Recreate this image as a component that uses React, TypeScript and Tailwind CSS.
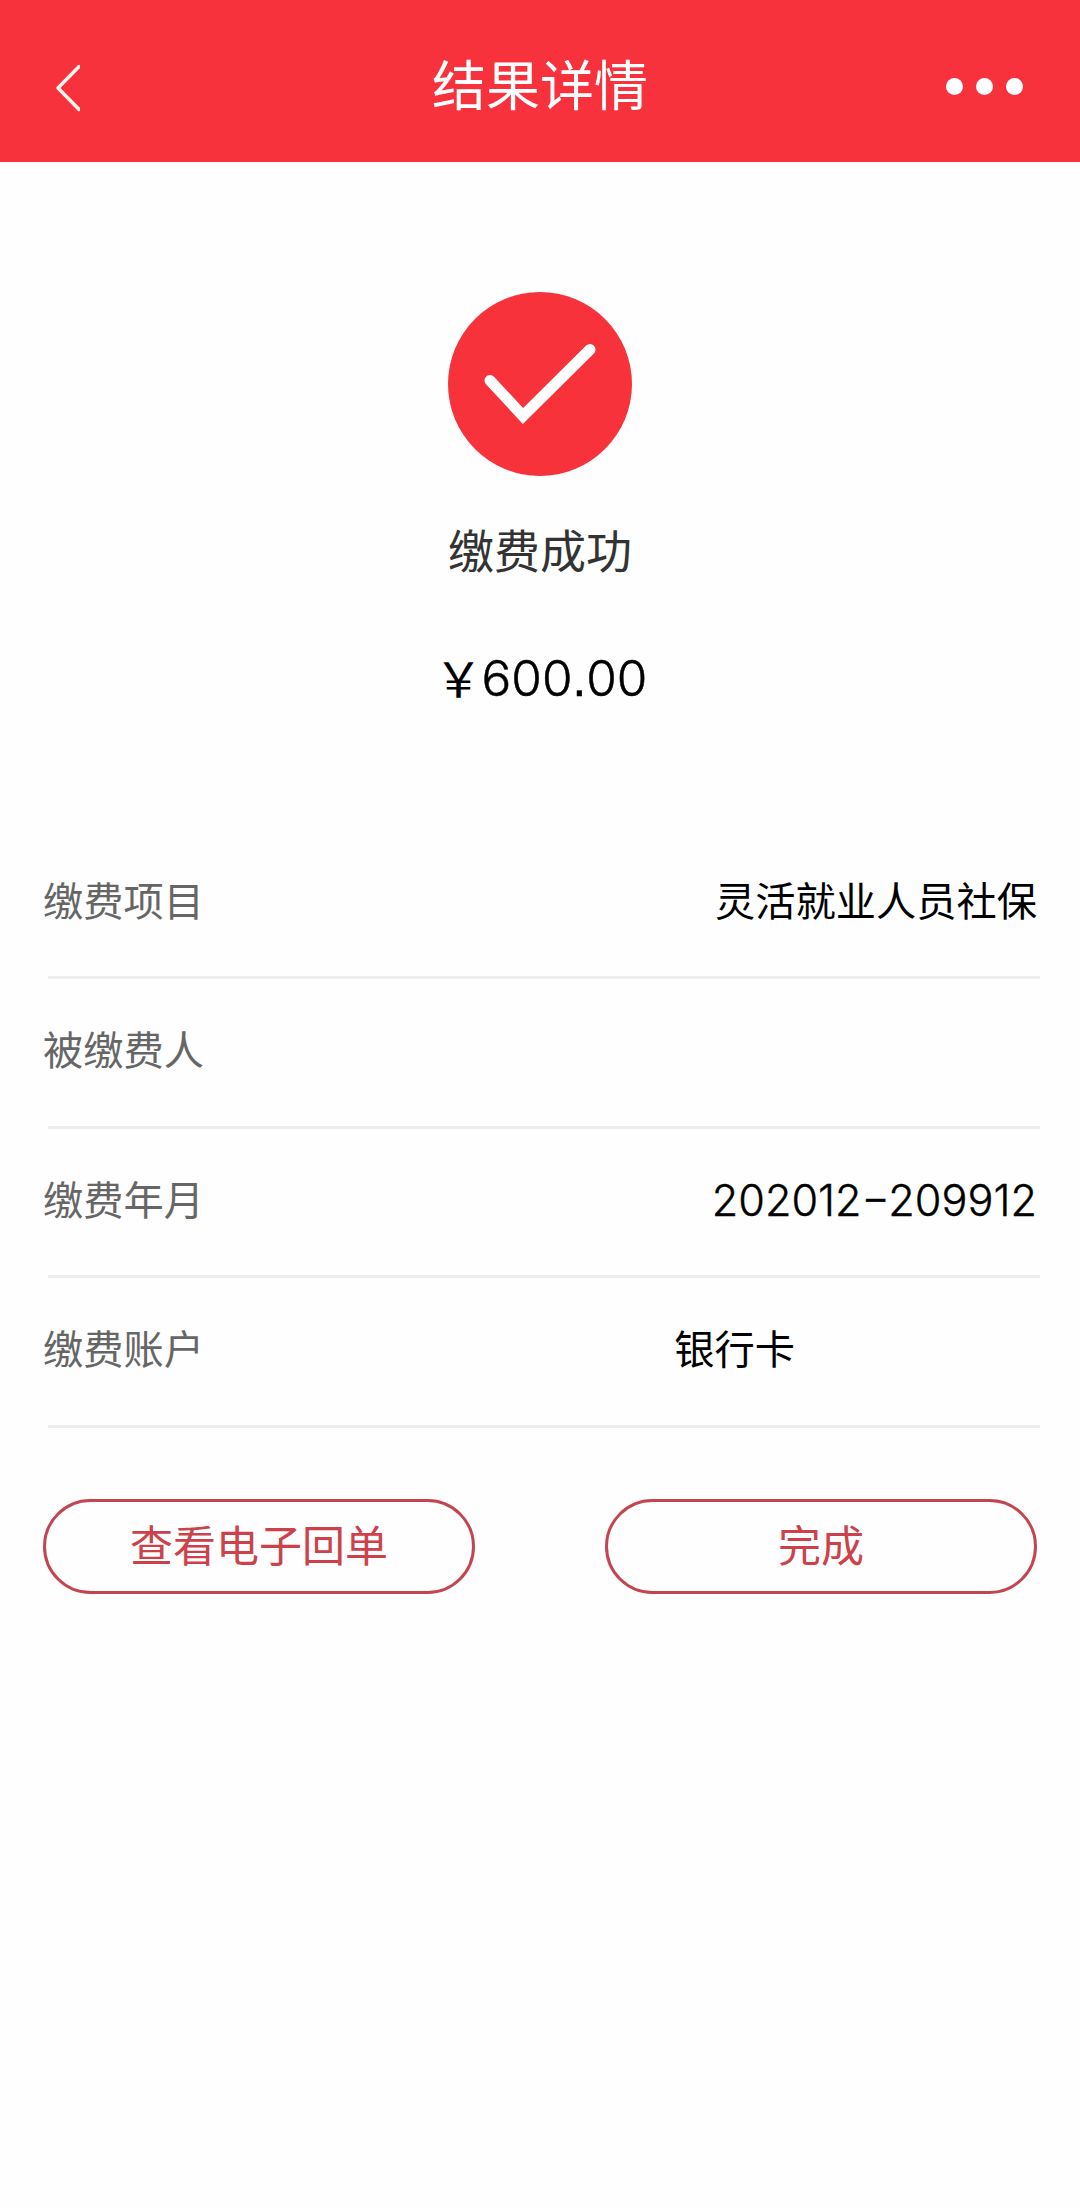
const rows = [
  { label: "缴费项目", value: "灵活就业人员社保" },
  { label: "被缴费人", value: "" },
  { label: "缴费年月", value: "202012−209912", numeric: true },
  { label: "缴费账户", value: "银行卡", inset: true },
];

function BackIcon() {
  return (
    <svg width="26" height="48" viewBox="0 0 26 48" fill="none" stroke="#fff5ef" strokeWidth="3.4" strokeLinecap="round" strokeLinejoin="round">
      <path d="M25 2.5 4 24 25 45.5" />
    </svg>
  );
}

function SuccessIcon() {
  return (
    <svg width="184" height="184" viewBox="0 0 184 184" fill="none">
      <circle cx="92" cy="92" r="92" fill="#f8323b" />
      <path d="M42 88.5 75 124 142 57.5" stroke="#fff" strokeWidth="11" strokeLinecap="round" strokeLinejoin="miter" />
    </svg>
  );
}

function Header() {
  return (
    <header className="grid h-[162px] grid-cols-3 items-center bg-[#f8323d] pt-[13px] text-white">
      <button className="pl-[54px]" aria-label="返回">
        <BackIcon />
      </button>
      <h1 className="-mt-[9px] text-center text-[54px] leading-none">结果详情</h1>
      <button className="-mt-[3px] flex justify-end gap-[13px] pr-[57px]" aria-label="更多">
        <span className="size-[17px] rounded-full bg-white" />
        <span className="size-[17px] rounded-full bg-white" />
        <span className="size-[17px] rounded-full bg-white" />
      </button>
    </header>
  );
}

export default function App() {
  return (
    <div className="min-h-[2208px] w-[1080px] bg-[#fefefe] font-['Noto_Sans_CJK_SC',sans-serif]">
      <Header />

      <section className="flex flex-col items-center pt-[130px]">
        <SuccessIcon />
        <p className="mt-[49px] text-[46px] leading-[46px] text-[#333]">缴费成功</p>
        <p className="mt-[82px] flex h-[52px] items-center pl-[2px] text-[49.5px] leading-none text-black">
          <span className="-mt-[7px] w-[47px] text-[48px]">{"\uFFE5"}</span>
          <span className="font-['Inter',sans-serif] font-light [-webkit-text-stroke:0.5px_black]">
            600<span className="font-['Liberation_Sans',sans-serif]">.</span>00
          </span>
        </p>
      </section>

      <section className="mt-[125px] text-[40.25px]">
        {rows.map((row) => (
          <div key={row.label}>
            <div className="flex h-[146.4px] items-center justify-between px-[43px] pb-[8px]">
              <span className="text-[#666]">{row.label}</span>
              <span
                className={`text-black ${row.numeric ? "pt-[5px] font-['Inter',sans-serif] text-[43.2px] font-light [-webkit-text-stroke:0.4px_black]" : ""} ${row.inset ? "mr-[242px]" : ""}`}
              >
                {row.value}
              </span>
            </div>
            <div className="mr-10 ml-12 h-[3px] bg-[#ededed]" />
          </div>
        ))}
      </section>

      {/* Actions */}
      <div className="mt-[71px] flex justify-between px-[43px] text-[43px] text-[#cd414a]">
        <button className="h-[95px] w-[432px] rounded-full border-3 border-[#c4454f] pb-[6px] leading-none">查看电子回单</button>
        <button className="h-[95px] w-[432px] rounded-full border-3 border-[#c4454f] pb-[6px] leading-none">完成</button>
      </div>
    </div>
  );
}
